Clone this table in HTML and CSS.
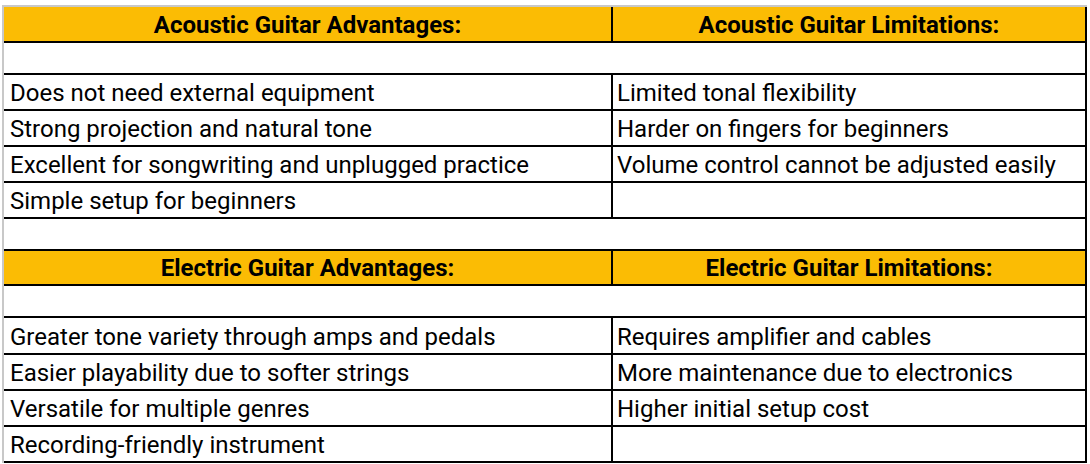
FILE: index.html
```html
<!DOCTYPE html>
<html>
<head>
<meta charset="utf-8">
<link rel="stylesheet" href="styles.css">
</head>
<body>
<div class="sheet">
  <div class="row head h34"><div class="cell left">Acoustic Guitar Advantages:</div><div class="cell right">Acoustic Guitar Limitations:</div></div>
  <div class="row blank h30"></div>
  <div class="row data h34"><div class="cell left">Does not need external equipment</div><div class="cell right">Limited tonal flexibility</div></div>
  <div class="row data h34"><div class="cell left">Strong projection and natural tone</div><div class="cell right">Harder on fingers for beginners</div></div>
  <div class="row data h34"><div class="cell left">Excellent for songwriting and unplugged practice</div><div class="cell right">Volume control cannot be adjusted easily</div></div>
  <div class="row data h34"><div class="cell left">Simple setup for beginners</div><div class="cell right"></div></div>
  <div class="row blank h30"></div>
  <div class="row head h33"><div class="cell left">Electric Guitar Advantages:</div><div class="cell right">Electric Guitar Limitations:</div></div>
  <div class="row blank h30"></div>
  <div class="row data h35"><div class="cell left">Greater tone variety through amps and pedals</div><div class="cell right">Requires amplifier and cables</div></div>
  <div class="row data h34"><div class="cell left">Easier playability due to softer strings</div><div class="cell right">More maintenance due to electronics</div></div>
  <div class="row data h34"><div class="cell left">Versatile for multiple genres</div><div class="cell right">Higher initial setup cost</div></div>
  <div class="row data h34"><div class="cell left">Recording-friendly instrument</div><div class="cell right"></div></div>
</div>
</body>
</html>
```
FILE: styles.css
```css
html, body {
  margin: 0;
  padding: 0;
  background: #ffffff;
}
body {
  font-family: Roboto, "Liberation Sans", sans-serif;
  color: #000000;
  width: 1090px;
  height: 464px;
  overflow: hidden;
}
.sheet {
  margin-top: 5px;
  margin-left: 2px;
  width: 1085px;
  border-top: 2px solid #c8c8c8;
  border-left: 2px solid #c8c8c8;
  box-sizing: border-box;
}
.row {
  display: flex;
  border-bottom: 2px solid #000;
  border-right: 2px solid #000;
  box-sizing: content-box;
}
.h30 { height: 30px; }
.h33 { height: 33px; }
.h34 { height: 34px; }
.h35 { height: 35px; }
.cell {
  display: flex;
  align-items: center;
  font-size: 24px;
  white-space: nowrap;
  overflow: hidden;
  box-sizing: border-box;
}
.cell.left {
  width: 609px;
  border-right: 2px solid #000;
  flex: none;
}
.cell.right {
  flex: 1;
}
.head {
  background: #fbbc04;
}
.head .cell {
  justify-content: center;
  font-weight: 700;
  padding-top: 1px;
}
.data .cell {
  padding-top: 2px;
}
.data .cell.left {
  padding-left: 6px;
}
.data .cell.right {
  padding-left: 4px;
}
```
